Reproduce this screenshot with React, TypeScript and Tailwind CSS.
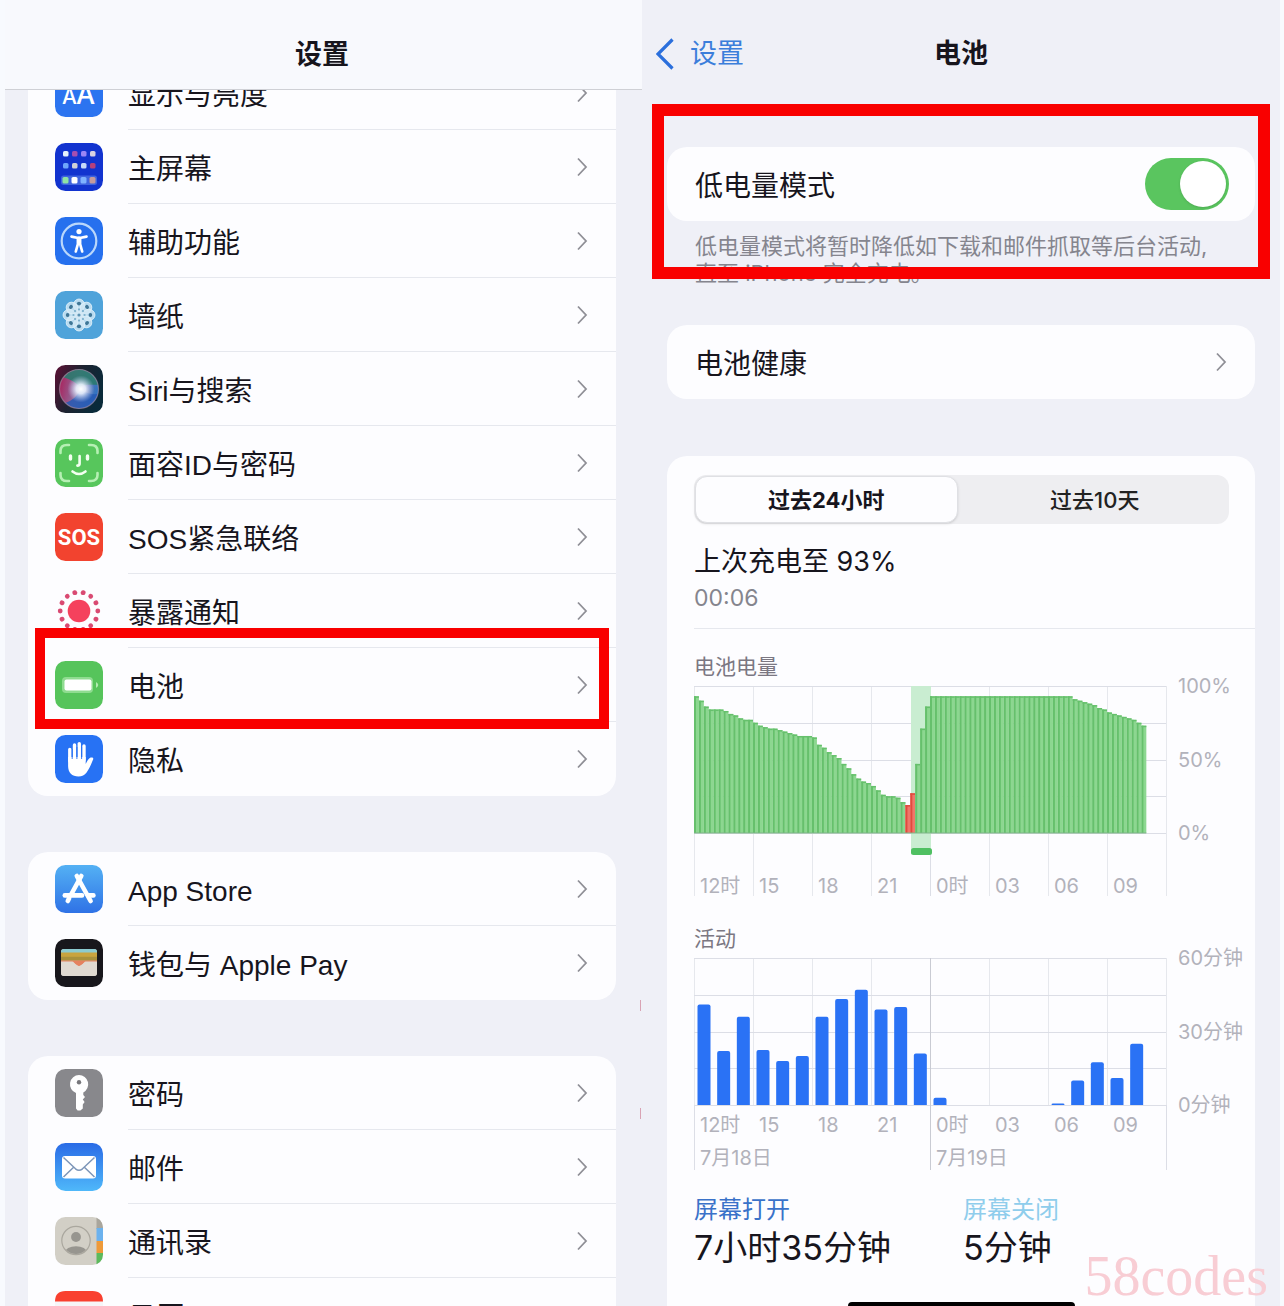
import { useState, type ReactNode } from "react";

type Item = {
  label: string;
  icon: ReactNode;
  highlighted?: boolean;
};

function Tile({ fill, children }: { fill: string; children?: ReactNode }) {
  return (
    <svg viewBox="0 0 48 48" className="h-12 w-12 shrink-0" aria-hidden="true">
      <rect width="48" height="48" rx="10.5" fill={fill} />
      {children}
    </svg>
  );
}

function DisplayIcon() {
  return (
    <Tile fill="#2c74f0">
      <g fill="#fff" fontFamily="Inter, sans-serif" fontWeight="500">
        <text x="7" y="35" fontSize="21">A</text>
        <text x="21" y="35" fontSize="27">A</text>
      </g>
    </Tile>
  );
}

const homeDots = [
  ["#e6f1fb", "#a44fb0", "#9a86f5", "#d9d2e2"],
  ["#6fa6fb", "#cfd0d6", "#c6d8f8", "#b5407c"],
];

function HomeScreenIcon() {
  return (
    <Tile fill="#1233cf">
      {homeDots.map((row, r) =>
        row.map((color, c) => (
          <rect key={`${r}-${c}`} x={8 + c * 9} y={8 + r * 12} width="5.5" height="5.5" rx="1.6" fill={color} />
        ))
      )}
      <rect x="6" y="32.5" width="36" height="9.5" rx="2.5" fill="#3f63df" />
      <rect x="7.5" y="34" width="6" height="6.5" rx="1.6" fill="#8fe2a4" />
      <rect x="16.5" y="34" width="6" height="6.5" rx="1.6" fill="#ffffff" />
      <rect x="25.5" y="34" width="6" height="6.5" rx="1.6" fill="#7fb2ff" />
      <rect x="34.5" y="34" width="6" height="6.5" rx="1.6" fill="#c59a9c" />
    </Tile>
  );
}

function AccessibilityIcon() {
  return (
    <Tile fill="#2670ee">
      <circle cx="24" cy="24" r="17.3" fill="none" stroke="#b9d7fb" strokeWidth="2.2" />
      <circle cx="24" cy="14.6" r="2.6" fill="#fff" />
      <path
        d="M16.5 19.6 L22 20.8 H26 L31.5 19.6 M24 20.5 V26 M22.9 21 V27 L20.8 34.5 M25.1 21 V27 L27.2 34.5"
        fill="none"
        stroke="#fff"
        strokeWidth="2.7"
        strokeLinecap="round"
        strokeLinejoin="round"
      />
    </Tile>
  );
}

function WallpaperIcon() {
  return (
    <Tile fill="#4fa3da">
      {[0, 45, 90, 135, 180, 225, 270, 315].map((angle) => (
        <g key={angle} transform={`rotate(${angle} 24 24)`}>
          <ellipse cx="24" cy="14.4" rx="5.6" ry="6.4" fill="#d3e8f5" fillOpacity="0.8" stroke="#e4f3fa" strokeWidth="0.8" />
        </g>
      ))}
      {[0, 45, 90, 135, 180, 225, 270, 315].map((angle) => (
        <g key={angle} transform={`rotate(${angle} 24 24)`}>
          <ellipse cx="24" cy="12.6" rx="2.1" ry="1.8" fill="#3f7696" />
          <circle cx="24" cy="18.4" r="1.1" fill="#7db0cc" />
        </g>
      ))}
      <circle cx="24" cy="24" r="4" fill="#d3e8f5" />
      <circle cx="24" cy="24" r="1.6" fill="#5c93b3" />
    </Tile>
  );
}

function SiriIcon() {
  return (
    <svg viewBox="0 0 48 48" className="h-12 w-12 shrink-0" aria-hidden="true">
      <defs>
        <linearGradient id="siriBack" x1="0" y1="0" x2="1" y2="0.4">
          <stop offset="0" stopColor="#5d1035" />
          <stop offset="0.5" stopColor="#1d2230" />
          <stop offset="1" stopColor="#0a2a3a" />
        </linearGradient>
        <linearGradient id="siriOrb" x1="0" y1="0.4" x2="1" y2="0.6">
          <stop offset="0" stopColor="#a8265f" />
          <stop offset="0.45" stopColor="#8f6f9f" />
          <stop offset="1" stopColor="#2774c4" />
        </linearGradient>
        <radialGradient id="siriGlow" cx="0.53" cy="0.5" r="0.45">
          <stop offset="0" stopColor="#fff" />
          <stop offset="0.35" stopColor="#eef4ff" stopOpacity="0.9" />
          <stop offset="1" stopColor="#b9c8f0" stopOpacity="0" />
        </radialGradient>
        <clipPath id="siriClip">
          <circle cx="24" cy="24" r="19.5" />
        </clipPath>
      </defs>
      <rect width="48" height="48" rx="10.5" fill="url(#siriBack)" />
      <circle cx="24" cy="24" r="19.5" fill="url(#siriOrb)" />
      <g clipPath="url(#siriClip)">
        <path d="M12 2 C24 0 42 4 45 20 C36 20 30 19 25 22 C20 16 13 14 8 12 Z" fill="#2a7a6e" fillOpacity="0.9" />
        <path d="M10 38 C18 36 22 30 26 25 C34 30 42 30 45 28 L38 46 H14 Z" fill="#2459b4" fillOpacity="0.85" />
      </g>
      <circle cx="24" cy="24" r="19.5" fill="none" stroke="#a98fa8" strokeOpacity="0.6" strokeWidth="1.2" />
      <circle cx="25" cy="24" r="15" fill="url(#siriGlow)" />
    </svg>
  );
}

function FaceIcon() {
  return (
    <Tile fill="#57c65c">
      <g fill="none" stroke="#b6f0b4" strokeWidth="2.6" strokeLinecap="round">
        <path d="M5.5 14 V12 Q5.5 6 12 6 H14" />
        <path d="M34 6 H36 Q42.5 6 42.5 12 V14" />
        <path d="M42.5 34 V36 Q42.5 42 36 42 H34" />
        <path d="M14 42 H12 Q5.5 42 5.5 36 V34" />
      </g>
      <g fill="none" stroke="#f2fff0" strokeWidth="2.6" strokeLinecap="round">
        <path d="M15.5 17 V20" strokeWidth="3.4" />
        <path d="M32.5 17 V20" strokeWidth="3.4" />
        <path d="M24.6 17 V24.5 Q24.6 26.6 22.4 26.6" />
        <path d="M17.5 32.5 Q24 37.5 30.5 32.5" />
      </g>
    </Tile>
  );
}

function SosIcon() {
  return (
    <Tile fill="#f2432f">
      <text x="24" y="32" textAnchor="middle" fontSize="22" fontWeight="700" fill="#fff" fontFamily="Roboto, sans-serif">
        SOS
      </text>
    </Tile>
  );
}

function ExposureIcon() {
  return (
    <svg viewBox="0 0 48 48" className="h-12 w-12 shrink-0" aria-hidden="true">
      <circle cx="24" cy="24" r="11.3" fill="#f5415d" />
      {Array.from({ length: 14 }, (_, i) => (
        <circle key={i} cx="24" cy="5.2" r="2.4" fill="#d94a72" transform={`rotate(${12.86 + i * 25.71} 24 24)`} />
      ))}
    </svg>
  );
}

function BatteryIcon() {
  return (
    <Tile fill="#56c45b">
      <rect x="7" y="16" width="31" height="16" rx="4" fill="#8fdc90" />
      <rect x="9.5" y="18.5" width="27" height="11" rx="2" fill="#fff" />
      <path d="M41 21 Q45.5 24 41 27 Z" fill="#b3ecb1" />
    </Tile>
  );
}

function HandIcon() {
  return (
    <Tile fill="#2772f4">
      <g stroke="#fff" strokeLinecap="round" fill="none">
        <path d="M14.8 14.5 V26" strokeWidth="3.4" />
        <path d="M19.5 10 V25" strokeWidth="3.4" />
        <path d="M24.3 8.6 V25" strokeWidth="3.4" />
        <path d="M29 11 V25" strokeWidth="3.4" />
      </g>
      <path
        d="M13.1 22 H30.7 V29 C32 26.5 33.6 23.4 35.6 22.6 C37.2 22 38.7 22.8 38.2 24.2 C36.5 28.4 34.4 33.6 31.6 37.6 C29.6 40.4 27 41.5 23.5 41.5 C17 41.5 13.1 37.6 13.1 31 Z"
        fill="#fff"
      />
      <path d="M17.2 14 V24 M21.9 12 V24 M26.6 12 V24" stroke="#2772f4" strokeWidth="0.9" />
    </Tile>
  );
}

function AppStoreIcon() {
  return (
    <Tile fill="url(#storeSky)">
      <defs>
        <linearGradient id="storeSky" x1="0" y1="0" x2="0" y2="1">
          <stop offset="0" stopColor="#54b1f4" />
          <stop offset="1" stopColor="#2f72e6" />
        </linearGradient>
      </defs>
      <g stroke="#fff" strokeWidth="4.6" strokeLinecap="round" fill="none">
        <path d="M26.3 11 L16.4 29" />
        <path d="M14.2 33 L12.8 36" />
        <path d="M21.8 11 L35.6 36" />
        <path d="M9.8 30.4 H27" />
        <path d="M34 30.4 H38.4" />
      </g>
    </Tile>
  );
}

function WalletIcon() {
  return (
    <Tile fill="#18171c">
      <rect x="6" y="10" width="36" height="27" rx="3" fill="#ddd6cd" />
      <path d="M6 13 Q6 10 9 10 H39 Q42 10 42 13 V16 H6 Z" fill="#8ccbd0" />
      <rect x="6" y="13.5" width="36" height="4.5" fill="#c9a43f" />
      <rect x="6" y="17.8" width="36" height="4" fill="#a9913c" />
      <path d="M6 21.5 H42 V24 H29 L24 27.5 L19 24 H6 Z" fill="#e5825f" />
      <path d="M6 22.6 H17.4 C19.6 22.6 19.6 27 24 27 C28.4 27 28.4 22.6 30.6 22.6 H42 V34 Q42 37 39 37 H9 Q6 37 6 34 Z" fill="#e0dad1" />
    </Tile>
  );
}

function KeyIcon() {
  return (
    <Tile fill="#88888c">
      <path
        d="M24 6 a9.3 9.3 0 0 1 4.3 17.5 V26 L30 28 L27.8 30.6 L29.6 33 L27.8 35.4 V39.4 L25.4 41.5 H22.6 L21 39.5 V24 A9.3 9.3 0 0 1 24 6 Z"
        fill="#fff"
      />
      <circle cx="24" cy="13.3" r="2.2" fill="#77777b" />
    </Tile>
  );
}

function MailIcon() {
  return (
    <Tile fill="url(#mailSky)">
      <defs>
        <linearGradient id="mailSky" x1="0" y1="0" x2="0" y2="1">
          <stop offset="0" stopColor="#2a6be6" />
          <stop offset="1" stopColor="#4fb8fa" />
        </linearGradient>
      </defs>
      <rect x="7" y="13" width="34" height="22.5" rx="3" fill="#fff" />
      <path
        d="M8.5 14.5 L20.5 25.8 Q24 28.6 27.5 25.8 L39.5 14.5 M8.5 34 L18.6 24.2 M39.5 34 L29.4 24.2"
        fill="none"
        stroke="#7d96b8"
        strokeWidth="1.5"
      />
    </Tile>
  );
}

function ContactsIcon() {
  return (
    <svg viewBox="0 0 48 48" className="h-12 w-12 shrink-0" aria-hidden="true">
      <defs>
        <clipPath id="contactsTile">
          <rect width="48" height="48" rx="10.5" />
        </clipPath>
        <clipPath id="contactsHead">
          <circle cx="21" cy="23.5" r="13.6" />
        </clipPath>
      </defs>
      <g clipPath="url(#contactsTile)">
        <rect width="48" height="48" fill="#d2cfc6" />
        <rect x="41.5" y="0" width="7" height="12" fill="#a9a69d" />
        <rect x="41.5" y="11" width="7" height="13" fill="#6cb2ee" />
        <rect x="41.5" y="24" width="7" height="12" fill="#ee9a3a" />
        <rect x="41.5" y="36" width="7" height="12" fill="#5cba5c" />
      </g>
      <circle cx="21" cy="23.5" r="14.2" fill="none" stroke="#aaa79e" strokeWidth="1.2" />
      <circle cx="21" cy="20" r="4.9" fill="#97958f" />
      <g clipPath="url(#contactsHead)">
        <ellipse cx="21" cy="35.5" rx="11" ry="6.3" fill="#97958f" />
      </g>
    </svg>
  );
}

function CalendarIcon() {
  return (
    <svg viewBox="0 0 48 48" className="h-12 w-12 shrink-0" aria-hidden="true">
      <rect width="48" height="48" rx="10.5" fill="#f6f6f8" />
      <path d="M0 10.5 Q0 0 10.5 0 H37.5 Q48 0 48 10.5 Z" fill="#f9402f" />
    </svg>
  );
}

const groups: Item[][] = [
  [
    { label: "显示与亮度", icon: <DisplayIcon /> },
    { label: "主屏幕", icon: <HomeScreenIcon /> },
    { label: "辅助功能", icon: <AccessibilityIcon /> },
    { label: "墙纸", icon: <WallpaperIcon /> },
    { label: "Siri与搜索", icon: <SiriIcon /> },
    { label: "面容ID与密码", icon: <FaceIcon /> },
    { label: "SOS紧急联络", icon: <SosIcon /> },
    { label: "暴露通知", icon: <ExposureIcon /> },
    { label: "电池", icon: <BatteryIcon />, highlighted: true },
    { label: "隐私", icon: <HandIcon /> },
  ],
  [
    { label: "App Store", icon: <AppStoreIcon /> },
    { label: "钱包与 Apple Pay", icon: <WalletIcon /> },
  ],
  [
    { label: "密码", icon: <KeyIcon /> },
    { label: "邮件", icon: <MailIcon /> },
    { label: "通讯录", icon: <ContactsIcon /> },
    { label: "日历", icon: <CalendarIcon /> },
  ],
];

function Chevron() {
  return (
    <svg viewBox="0 0 12 20" className="h-5 w-3 shrink-0" aria-hidden="true">
      <path d="M2 1.5 L10 10 L2 18.5" fill="none" stroke="#8f8f96" strokeWidth="1.8" />
    </svg>
  );
}

function SettingsRow({ item }: { item: Item }) {
  return (
    <li className="group relative">
      <a href="#" className="flex h-[74px] items-center gap-[25px] pl-[27px]">
        {item.icon}
        <span className="flex h-full flex-1 items-center justify-between border-b border-[#e6e8ee] pr-7 group-last:border-transparent">
          <span className="pt-[6px]">{item.label}</span>
          <Chevron />
        </span>
      </a>
      {item.highlighted && (
        <span className="pointer-events-none absolute -top-5 -bottom-[7px] left-[7px] right-[7px] z-10 border-[10px] border-[#f90000]" />
      )}
    </li>
  );
}

function SettingsPanel() {
  return (
    <section className="flex min-w-0 flex-col overflow-hidden border-l-[5px] border-[#f8fafe] bg-[#eff0f7]">
      <header className="z-20 flex h-[90px] shrink-0 items-center justify-center border-b border-[#cfd0d5] bg-[#f8f9fd] pr-[3px] pt-5">
        <h1 className="text-[27px] font-bold leading-9">设置</h1>
      </header>
      <nav className="-mt-[34px] flex flex-col gap-14 pl-[23px] pr-[26px] font-['Liberation_Sans','Noto_Sans_CJK_SC',sans-serif] text-[28px] leading-10">
        {groups.map((items, i) => (
          <ul key={i} className="rounded-[20px] bg-[#fdfdff]">
            {items.map((item) => (
              <SettingsRow key={item.label} item={item} />
            ))}
          </ul>
        ))}
      </nav>
    </section>
  );
}

// one value per quarter of an hour, starting at 12:00
const batteryLevels = [
  93, 90, 86, 84, 84, 84, 83, 81, 80, 78, 77, 77, 75, 73, 72, 71, 71, 70, 69, 68, 67, 66, 66, 66, 65, 60, 58, 55, 53,
  51, 47, 44, 40, 37, 35, 34, 32, 29, 26, 25, 25, 24, 21, 19, 27, 47, 71, 86, 93, 93, 93, 93, 93, 93, 93, 93, 93, 93,
  93, 93, 93, 93, 93, 93, 93, 93, 93, 93, 93, 93, 93, 93, 93, 93, 93, 93, 93, 91, 90, 89, 88, 87, 85, 84, 82, 81, 80,
  79, 78, 77, 75, 73,
];
const lowPowerSlots = [43, 44];

// minutes of use per hour, starting at 12:00
const activity = [41, 22, 36, 22.4, 18, 20, 36, 43.3, 47, 39, 40, 21, 3, 0, 0, 0, 0, 0, 0.6, 10, 17.5, 11, 25];

const hourLabels = ["12时", "15", "18", "21", "0时", "03", "06", "09"];

const PLOT_WIDTH = 472;
const PLOT_HEIGHT = 147;
const PLOT_TOP = 5;
const PLOT_BASE = PLOT_TOP + PLOT_HEIGHT;

function Grid({ bottom }: { bottom: number }) {
  return (
    <g stroke="#dcdee6" strokeWidth="1">
      {[0, 1, 2, 3, 4].map((i) => {
        const y = PLOT_TOP + 0.5 + Math.round((i * PLOT_HEIGHT) / 4);
        return <line key={i} x1="0" x2={PLOT_WIDTH} y1={y} y2={y} />;
      })}
      {hourLabels.concat("").map((_, i) => (
        <line key={i} x1={0.5 + i * 59} x2={0.5 + i * 59} y1={PLOT_TOP} y2={bottom} strokeOpacity={i === 4 ? 1 : 0.7} />
      ))}
    </g>
  );
}

function HourLabels({ y }: { y: number }) {
  return (
    <>
      {hourLabels.map((label, i) => (
        <text key={label} x={6 + i * 59} y={y}>
          {label}
        </text>
      ))}
    </>
  );
}

function BatteryChart() {
  const slot = PLOT_WIDTH / 96;

  return (
    <svg viewBox="0 0 561 216" className="block w-full overflow-visible" role="img" aria-label="电池电量">
      <Grid bottom={215} />
      <rect x="217" y={PLOT_TOP} width="20" height="168" fill="#c9edd1" />
      {batteryLevels.map((level, i) => {
        const height = (level / 100) * PLOT_HEIGHT;
        const low = lowPowerSlots.includes(i);
        return (
          <g key={i}>
            <rect x={i * slot} y={PLOT_BASE - height} width={slot} height={height} fill={low ? "#f0766a" : "#8cd790"} />
            <rect x={i * slot} y={PLOT_BASE - height} width="2" height={height} fill={low ? "#e04b3e" : "#66c06c"} />
            <rect x={i * slot} y={PLOT_BASE - height} width={slot} height="1.5" fill={low ? "#e04b3e" : "#66c06c"} />
          </g>
        );
      })}
      <line x1="0" x2={92 * slot} y1={PLOT_BASE} y2={PLOT_BASE} stroke="#7fb487" strokeWidth="1.2" />
      <rect x="217" y="167" width="21" height="7" rx="2.5" fill="#4fc062" />
      <g fill="#b2b2bb" fontSize="20">
        <text x="484" y="12">100%</text>
        <text x="484" y="86">50%</text>
        <text x="484" y="159">0%</text>
        <HourLabels y={212} />
      </g>
    </svg>
  );
}

function ActivityChart() {
  const slot = PLOT_WIDTH / 24;

  return (
    <svg viewBox="0 0 561 220" className="block w-full overflow-visible" role="img" aria-label="活动">
      <Grid bottom={PLOT_BASE} />
      <g stroke="#dcdee6">
        <line x1="0.5" x2="0.5" y1={PLOT_BASE} y2="217" />
        <line x1="236.5" x2="236.5" y1={PLOT_TOP} y2="217" stroke="#c9cbd3" />
        <line x1="472.5" x2="472.5" y1={PLOT_BASE} y2="217" />
      </g>
      {activity.map((minutes, i) => {
        const height = (minutes / 60) * PLOT_HEIGHT;
        const radius = Math.min(2, height);
        const x = 3.5 + i * slot;
        if (!minutes) return null;
        return (
          <path
            key={i}
            d={`M${x} ${PLOT_BASE} v${-(height - radius)} q0 ${-radius} ${radius} ${-radius} h${13 - 2 * radius} q${radius} 0 ${radius} ${radius} v${height - radius} z`}
            fill="#2a72f5"
          />
        );
      })}
      <g fill="#b2b2bb" fontSize="20">
        <text x="484" y="12">60分钟</text>
        <text x="484" y="86">30分钟</text>
        <text x="484" y="159">0分钟</text>
        <HourLabels y={179} />
        <text x="6" y="212">7月18日</text>
        <text x="242" y="212">7月19日</text>
      </g>
    </svg>
  );
}

function RangeTabs() {
  const [range, setRange] = useState("过去24小时");
  return (
    <div className="mr-[26px] grid h-[49px] grid-cols-2 rounded-xl bg-[#eeeef1] p-px text-[22px] leading-8">
      {["过去24小时", "过去10天"].map((label) => (
        <button
          key={label}
          type="button"
          aria-pressed={range === label}
          onClick={() => setRange(label)}
          className={
            range === label
              ? "mr-1 rounded-xl border border-[#dfe0e4] bg-[#fdfdff] font-bold shadow"
              : "rounded-xl font-medium text-[#222]"
          }
        >
          {label}
        </button>
      ))}
    </div>
  );
}

function BatteryPanel() {
  const [lowPower, setLowPower] = useState(true);

  return (
    <section className="relative flex min-w-0 flex-col overflow-hidden border-r-[4px] border-[#f8fafe] bg-[#eff0f7] pl-[25px] pr-[25px]">
      <header className="-mx-[11px] grid h-[108px] shrink-0 grid-cols-3 items-center text-[27px] leading-9">
        <a href="#" className="flex items-center gap-4 text-[#3b7edb]">
          <svg viewBox="0 0 18 32" className="h-8 w-[18px]" aria-hidden="true">
            <path d="M16.5 1.5 L2 16 L16.5 30.5" fill="none" stroke="#2b6fdc" strokeWidth="3.2" />
          </svg>
          设置
        </a>
        <h2 className="text-center font-bold">电池</h2>
      </header>

      <div className="mt-[39px] flex h-[74px] shrink-0 items-center justify-between rounded-[20px] bg-[#fdfdff] pl-7 pr-[26px] text-[28px]">
        <label htmlFor="low-power" className="pt-1">
          低电量模式
        </label>
        <span className="relative flex">
          <input
            id="low-power"
            type="checkbox"
            role="switch"
            checked={lowPower}
            onChange={(e) => setLowPower(e.target.checked)}
            className="peer h-[52px] w-[84px] appearance-none rounded-full bg-[#e4e4ea] checked:bg-[#5ac55f]"
          />
          <span className="pointer-events-none absolute left-[3px] top-[3px] h-[46px] w-[46px] rounded-full bg-white shadow peer-checked:translate-x-8" />
        </span>
      </div>
      <p className="px-7 pt-3 text-[22px] leading-[27px] text-[#85858e]">
        低电量模式将暂时降低如下载和邮件抓取等后台活动,
        <br />
        直至 iPhone 完全充电。
      </p>
      <div className="pointer-events-none absolute left-[10px] right-[10px] top-[104px] h-[175px] border-[12px] border-[#f90000]" />

      <a
        href="#"
        className="mt-[38px] flex h-[74px] shrink-0 items-center justify-between rounded-[20px] bg-[#fdfdff] px-7 text-[28px]"
      >
        <span className="pt-1">电池健康</span>
        <Chevron />
      </a>

      <div className="mt-[57px] rounded-t-[20px] bg-[#fdfdff] pb-12 pl-[27px] pt-[19px]">
        <RangeTabs />
        <div className="border-b border-[#e6e8ee] pb-[14px] pt-[18px]">
          <h3 className="text-[27px] leading-10">上次充电至 93%</h3>
          <p className="text-[23px] leading-8 text-[#85858e]">00:06</p>
        </div>

        <h4 className="pt-6 text-[21px] leading-7 text-[#7b7782]">电池电量</h4>
        <BatteryChart />
        <h4 className="pt-7 text-[21px] leading-7 text-[#7b7782]">活动</h4>
        <ActivityChart />

        <dl className="grid grid-cols-[269px_1fr] pt-[21px]">
          <div>
            <dt className="text-2xl leading-8 text-[#3a72c9]">屏幕打开</dt>
            <dd className="text-[34px] leading-[44px]">7小时35分钟</dd>
          </div>
          <div>
            <dt className="text-2xl leading-8 text-[#8fcdec]">屏幕关闭</dt>
            <dd className="text-[34px] leading-[44px]">5分钟</dd>
          </div>
        </dl>
      </div>

      <span className="absolute bottom-0 left-[206px] h-1 w-[227px] rounded-t bg-black" />
    </section>
  );
}

export default function App() {
  return (
    <main
      lang="zh-CN"
      className="relative grid h-screen grid-cols-2 overflow-hidden bg-[#eff0f7] font-['Inter','Noto_Sans_CJK_SC',sans-serif] text-[#17151d]"
    >
      <SettingsPanel />
      <BatteryPanel />
      <span className="absolute bottom-[295px] left-1/2 h-[11px] w-px -translate-x-0.5 bg-[#d9a3b4]" />
      <span className="absolute bottom-[187px] left-1/2 h-[11px] w-px -translate-x-0.5 bg-[#d9a3b4]" />
      <p className="pointer-events-none absolute bottom-0 right-4 font-['Liberation_Serif',serif] text-[56px] leading-[60px] text-[#f8cdd4]">
        58codes
      </p>
    </main>
  );
}
